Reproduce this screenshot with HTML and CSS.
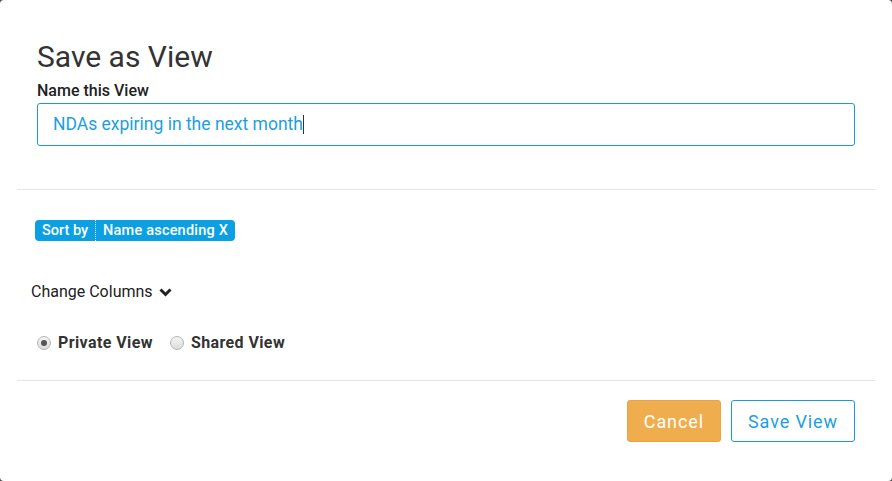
FILE: index.html
```html
<!DOCTYPE html>
<html lang="en">
<head>
    <meta charset="UTF-8">
    <meta name="viewport" content="width=device-width, initial-scale=1.0">
    <title>Save as View</title>
    <link rel="stylesheet" href="styles.css">
</head>
<body>
    <div class="modal">
        <div class="modal-header">
            <h1>Save as View</h1>
            <label class="field-label" for="view-name">Name this View</label>
            <div class="name-input" id="view-name">NDAs expiring in the next month<span class="caret"></span></div>
        </div>
        <div class="modal-body">
            <div class="sort-chip">
                <span class="chip-label">Sort by</span>
                <span class="chip-value">Name ascending X</span>
            </div>
            <div class="change-columns">
                Change Columns
                <svg class="chevron" width="13" height="10" viewBox="0 0 13 10">
                    <path d="M1.5 2.5 L6.5 7.5 L11.5 2.5" fill="none" stroke="#222" stroke-width="3"/>
                </svg>
            </div>
            <div class="view-type">
                <label class="radio"><span class="dot checked"></span>Private View</label>
                <label class="radio"><span class="dot"></span>Shared View</label>
            </div>
        </div>
        <div class="modal-footer">
            <button class="btn btn-cancel">Cancel</button>
            <button class="btn btn-save">Save View</button>
        </div>
    </div>
</body>
</html>
```

FILE: styles.css
```css
html, body {
    height: 100%;
}
body {
    margin: 0;
    background-color: #4a4a4a;
    font-family: Roboto, 'Liberation Sans', sans-serif;
    color: #222;
}
.modal {
    box-sizing: border-box;
    height: 100%;
    background-color: white;
    border-radius: 4px;
    padding: 0 17px;
}
.modal-header {
    padding: 37px 20px 43px;
    border-bottom: 1px solid #e5e5e5;
}
.modal-header h1 {
    margin: 0;
    font-size: 30px;
    font-weight: 400;
    color: #333;
    line-height: 40px;
}
.field-label {
    display: block;
    font-size: 16px;
    font-weight: 500;
    line-height: 20px;
    margin: 4px 0 2px;
}
.name-input {
    box-sizing: border-box;
    height: 43px;
    border: 1px solid #1a9ad6;
    border-radius: 3px;
    padding: 0 15px;
    font-size: 17.5px;
    line-height: 41px;
    color: #1b9fe0;
    display: flex;
    align-items: center;
}
.caret {
    display: inline-block;
    width: 1px;
    height: 19px;
    background-color: #333;
}
.modal-body {
    padding: 30px 0 26px;
    border-bottom: 1px solid #e5e5e5;
}
.sort-chip {
    display: inline-flex;
    margin-left: 18px;
    background-color: #0aa0e2;
    border-radius: 4px;
    color: white;
    font-size: 14.5px;
    font-weight: 500;
    line-height: 21px;
}
.chip-label {
    padding: 0 7px 0 7px;
    border-right: 1px dotted white;
}
.chip-value {
    padding: 0 7px 0 7px;
    letter-spacing: 0.2px;
}
.change-columns {
    margin: 40px 0 0 14px;
    font-size: 16px;
    line-height: 22px;
    display: flex;
    align-items: center;
    gap: 6px;
}
.view-type {
    margin: 29px 0 0 20px;
    display: flex;
    gap: 17px;
}
.radio {
    display: flex;
    align-items: center;
    gap: 7px;
    font-size: 16px;
    font-weight: 700;
    color: #333;
    line-height: 22px;
    letter-spacing: 0.4px;
}
.dot {
    box-sizing: border-box;
    width: 14px;
    height: 14px;
    border-radius: 50%;
    border: 1px solid #b5b5b5;
    background: linear-gradient(#f4f4f4, #dcdcdc);
    position: relative;
}
.dot.checked::after {
    content: '';
    position: absolute;
    left: 3px;
    top: 3px;
    width: 6px;
    height: 6px;
    border-radius: 50%;
    background-color: #555;
}
.modal-footer {
    display: flex;
    justify-content: flex-end;
    gap: 10px;
    padding: 19px 20px;
}
.btn {
    height: 42px;
    font-family: inherit;
    font-size: 18px;
    letter-spacing: 0.9px;
    border-radius: 3px;
    cursor: pointer;
    padding: 0 16px;
}
.btn-cancel {
    background-color: #f0ad4e;
    border: 1px solid #e9a43f;
    color: white;
}
.btn-save {
    background-color: white;
    border: 1px solid #1a9ad6;
    color: #1b9fe0;
}
```
